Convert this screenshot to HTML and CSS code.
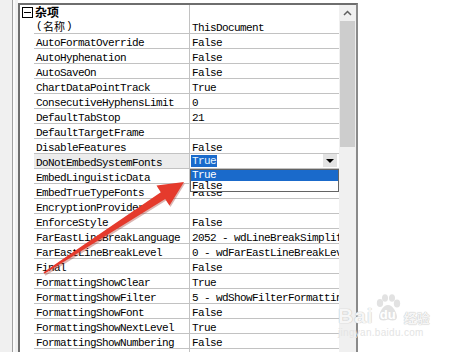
FILE: index.html
```html
<!DOCTYPE html>
<html lang="zh-CN">
<head>
  <meta charset="UTF-8"/>
  <title>属性 - ThisDocument</title>
  <link rel="stylesheet" href="styles.css">
</head>
<body>
  <div class="page">
    <div class="side"></div>
    <div class="frame">
      <div class="grid">
        <div class="cat">
          <div class="gut"><span class="toggle"><span class="minus"></span></span></div>
          <div class="name cat-name">杂项</div>
          <div class="val"></div>
        </div>
        <div class="row"><div class="gut"></div><div class="name zh">(<span class="cjk">名称</span>)</div><div class="val">ThisDocument</div></div>
        <div class="row"><div class="gut"></div><div class="name">AutoFormatOverride</div><div class="val">False</div></div>
        <div class="row"><div class="gut"></div><div class="name">AutoHyphenation</div><div class="val">False</div></div>
        <div class="row"><div class="gut"></div><div class="name">AutoSaveOn</div><div class="val">False</div></div>
        <div class="row"><div class="gut"></div><div class="name">ChartDataPointTrack</div><div class="val">True</div></div>
        <div class="row"><div class="gut"></div><div class="name">ConsecutiveHyphensLimit</div><div class="val">0</div></div>
        <div class="row"><div class="gut"></div><div class="name">DefaultTabStop</div><div class="val">21</div></div>
        <div class="row"><div class="gut"></div><div class="name">DefaultTargetFrame</div><div class="val"></div></div>
        <div class="row"><div class="gut"></div><div class="name">DisableFeatures</div><div class="val">False</div></div>
        <div class="row sel">
          <div class="gut"></div>
          <div class="name">DoNotEmbedSystemFonts</div>
          <div class="val"><span class="hl">True</span><span class="drop-btn"><span class="tri"></span></span></div>
        </div>
        <div class="row"><div class="gut"></div><div class="name">EmbedLinguisticData</div><div class="val"></div></div>
        <div class="row"><div class="gut"></div><div class="name">EmbedTrueTypeFonts</div><div class="val">False</div></div>
        <div class="row"><div class="gut"></div><div class="name">EncryptionProvider</div><div class="val"></div></div>
        <div class="row"><div class="gut"></div><div class="name">EnforceStyle</div><div class="val">False</div></div>
        <div class="row"><div class="gut"></div><div class="name">FarEastLineBreakLanguage</div><div class="val">2052 - wdLineBreakSimplifiedChinese</div></div>
        <div class="row"><div class="gut"></div><div class="name">FarEastLineBreakLevel</div><div class="val">0 - wdFarEastLineBreakLevelNormal</div></div>
        <div class="row"><div class="gut"></div><div class="name">Final</div><div class="val">False</div></div>
        <div class="row"><div class="gut"></div><div class="name">FormattingShowClear</div><div class="val">True</div></div>
        <div class="row"><div class="gut"></div><div class="name">FormattingShowFilter</div><div class="val">5 - wdShowFilterFormattingInUse</div></div>
        <div class="row"><div class="gut"></div><div class="name">FormattingShowFont</div><div class="val">False</div></div>
        <div class="row"><div class="gut"></div><div class="name">FormattingShowNextLevel</div><div class="val">True</div></div>
        <div class="row"><div class="gut"></div><div class="name">FormattingShowNumbering</div><div class="val">False</div></div>
        <div class="row"><div class="gut"></div><div class="name">FormattingShowParagraph</div><div class="val">False</div></div>
      </div>
      <div class="scroll">
        <div class="up">
          <svg width="9" height="6" viewBox="0 0 9 6"><path d="M1 5 L4.5 1.5 L8 5" fill="none" stroke="#606060" stroke-width="1.5"/></svg>
        </div>
        <div class="thumb"></div>
      </div>
    </div>

    <!-- open dropdown list -->
    <div class="droplist">
      <div class="opt on">True</div>
      <div class="opt">False</div>
    </div>

    <!-- red pointer arrow -->
    <svg class="arrow" width="455" height="352" viewBox="0 0 455 352">
      <polygon points="44.5,274.2 161.8,193.6 157.5,187 185,183.5 170.5,207 166.2,200.4 45.5,275.8" fill="#9c2a22" opacity="0.35"/>
      <polygon points="43.5,272.2 160.8,192.2 156.5,185.5 184,182 169.5,205.6 165.2,199 44.5,273.8" fill="#e53a2c"/>
    </svg>

    <!-- watermark -->
    <div class="wm">
      <div class="wm-logo">
        <span class="wm-bai">Bai</span>
        <span class="wm-paw">
          <svg width="26" height="28" viewBox="0 0 26 28">
            <ellipse cx="5" cy="9" rx="3.2" ry="4" fill="#e2e2e2"/>
            <ellipse cx="10" cy="4" rx="3" ry="3.8" fill="#e2e2e2"/>
            <ellipse cx="17" cy="4" rx="3" ry="3.8" fill="#e2e2e2"/>
            <ellipse cx="22" cy="9.5" rx="3.2" ry="4" fill="#e2e2e2"/>
            <path d="M13 11 C8 11 4 19 4 23 C4 27 9 27 13 25.5 C17 27 22 27 22 23 C22 19 18 11 13 11 Z" fill="#e2e2e2"/>
          </svg>
          <span class="wm-du">du</span>
        </span>
        <span class="wm-jy">经验</span>
      </div>
      <div class="wm-url">jingyan.baidu.com</div>
    </div>
  </div>
</body>
</html>
```

FILE: styles.css
```css
* { box-sizing: border-box; }
body { margin: 0; background: #fff; color: #000; font-family: "Liberation Mono", "DejaVu Sans Mono", monospace; font-size: 11px; letter-spacing: -0.6px; overflow: hidden; }
.cjk, .cat-name { font-family: "Noto Sans CJK SC", sans-serif; font-size: 12px; letter-spacing: 0; }

.page { position: relative; width: 455px; height: 352px; display: flex; align-items: flex-start; overflow: hidden; }
.side { width: 18px; height: 352px; flex: none;
  background: linear-gradient(to right, #f0f0f0 12px, #a0a0a0 12px, #a0a0a0 13px, #fafafa 13px, #fafafa 15px, #f0f0f0 15px); }

.frame { margin-top: 3px; width: 340px; height: 360px; flex: none; display: flex; overflow: hidden;
  border: 2px solid #8a8a8a; border-bottom: none; border-left-color: #6e6e6e; border-top-color: #6e6e6e; background: #fff; }

.grid { flex: 1; min-width: 0; }
.cat, .row { display: flex; }
.cat { height: 14px; }
.row { height: 15px; }
.gut { width: 14px; flex: none; }
.name { width: 156px; flex: none; padding: 3px 0 0 2px; border-right: 1px solid #c2c2c2; line-height: 12px; white-space: nowrap; overflow: hidden; }
.row .name, .row .val { border-bottom: 1px solid #c2c2c2; }
.val { flex: 1; min-width: 0; padding: 3px 0 0 2px; line-height: 12px; white-space: nowrap; overflow: hidden; }

.name.zh { display: flex; align-items: center; padding: 0 0 0 2px; overflow: visible; }
.zh .cjk { font-size: 11px; line-height: 12px; margin: 0 1px; }

.cat .name { padding: 0 0 0 1px; overflow: visible; }
.cat-name { font-weight: bold; line-height: 14px; }
.toggle { display: flex; align-items: center; justify-content: center; width: 11px; height: 11px; margin: 2px 0 0 2px; border: 1px solid #000; }
.minus { width: 7px; height: 1px; background: #000; }

.sel .name { background: #ececec; }
.sel .val { display: flex; justify-content: space-between; align-items: flex-start; padding: 0 2px 0 1px; }
.hl { background: #1a6acb; color: #e6f6ff; line-height: 12px; margin-top: 1px; padding: 0 1px; }
.drop-btn { width: 14px; height: 13px; background: #e3e3e3; display: flex; align-items: center; justify-content: center; }
.tri { width: 0; height: 0; border-left: 4px solid transparent; border-right: 4px solid transparent; border-top: 4px solid #000; }

.scroll { width: 17px; flex: none; background: #f0f0f0; display: flex; flex-direction: column; align-items: center; }
.up { height: 16px; display: flex; align-items: center; justify-content: center; }
.thumb { width: 15px; height: 126px; background: #cdcdcd; }

.droplist { position: absolute; left: 190px; top: 169px; width: 149px; height: 23px; border: 1px solid #646464; background: #fff; }
.opt { height: 10.5px; line-height: 11px; padding-left: 1px; overflow: hidden; }
.opt.on { background: #1a6acb; color: #fff; }

.arrow { position: absolute; left: 0; top: 0; pointer-events: none; }

.wm { position: absolute; left: 338px; top: 294px; color: #f6f6f6; letter-spacing: 0; }
.wm-logo { display: flex; align-items: flex-end; height: 31px; }
.wm-bai { font-family: "Liberation Sans", sans-serif; font-weight: bold; font-size: 21px; line-height: 18px; letter-spacing: 1px; text-shadow: 0 0 1px #c4c4c4, 0 0 1px #c4c4c4; }
.wm-paw { display: flex; flex-direction: column; align-items: center; margin-left: 1px; height: 31px; }
.wm-paw svg { display: block; }
.wm-du { font-family: "Liberation Sans", sans-serif; font-weight: bold; font-size: 13px; line-height: 10px; margin-top: -12px; color: #fff; }
.wm-jy { font-family: "Noto Sans CJK SC", sans-serif; font-weight: bold; font-size: 13px; line-height: 14px; margin-left: 3px; text-shadow: 0 0 1px #c4c4c4, 0 0 1px #c4c4c4; }
.wm-url { font-family: "Liberation Sans", sans-serif; font-size: 10px; line-height: 12px; margin-top: 2px; color: #e4e4e4; letter-spacing: 0.3px; }
```
